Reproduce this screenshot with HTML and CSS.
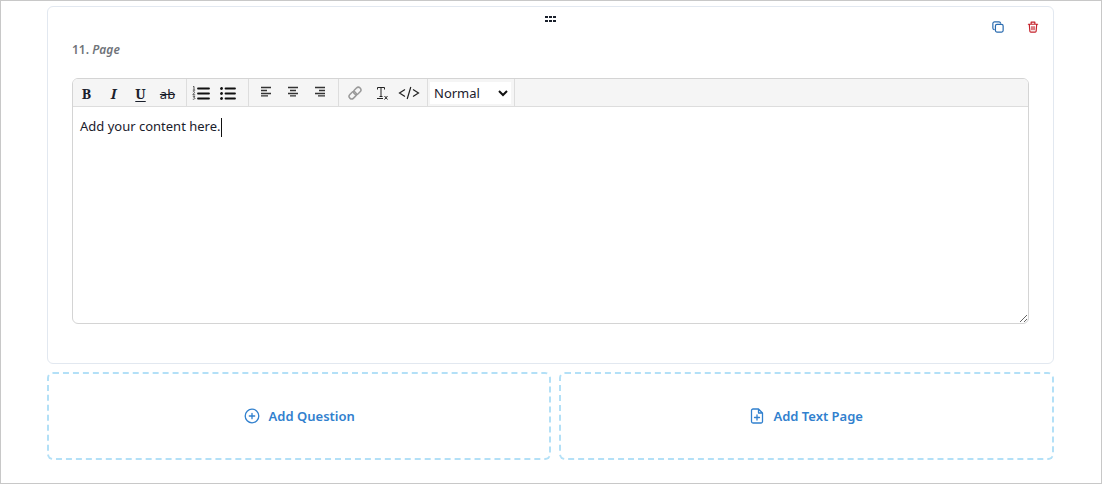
FILE: index.html
```html
<!DOCTYPE html>
<html lang="en">
<head>
<meta charset="utf-8">
<title>Form builder</title>
<link rel="stylesheet" href="styles.css">
</head>
<body class="page">
<main class="builder">
  <section class="card">
    <header class="card-bar">
      <button class="icon-button drag" type="button" aria-label="Move">
        <svg width="12" height="8" viewBox="0 0 12 8" fill="#1a202c"><path d="M0 1h3v2H0zM4 1h3v2H4zM8 1h3v2H8zM0 5h3v2H0zM4 5h3v2H4zM8 5h3v2H8z"/></svg>
      </button>
      <div class="card-actions">
        <button class="icon-button copy" type="button" aria-label="Duplicate">
          <svg width="12" height="12" viewBox="0 0 14 14" fill="none" stroke="currentColor" stroke-width="1.4" stroke-linejoin="round" stroke-linecap="round"><rect x="4" y="4" width="9" height="9" rx="1.8"/><path d="M2.500 10C1.500 9.800 1 9.200 1 8.200V3a2 2 0 0 1 2-2h5.200c1 0 1.600.5 1.800 1.500"/></svg>
        </button>
        <button class="icon-button trash" type="button" aria-label="Delete">
          <svg width="12" height="12" viewBox="0 0 12 13" fill="none" stroke="currentColor" stroke-width="1.3" stroke-linejoin="round" stroke-linecap="round"><path d="M1 3.500h10M4 3.300V1.200h4v2.100M2 3.700l.6 7.400c.1.700.4 1 1 1h4.800c.6 0 .9-.3 1-1l.6-7.400M4.900 6v3.500M7.100 6v3.500"/></svg>
        </button>
      </div>
    </header>
    <h2 class="card-title">11. <em>Page</em></h2>
    <div class="editor">
      <div class="toolbar" role="toolbar" aria-label="Formatting">
        <div class="group styles">
          <button class="tool serif bold" type="button">B</button>
          <button class="tool serif italic" type="button">I</button>
          <button class="tool serif underline" type="button">U</button>
          <button class="tool strike" type="button">ab</button>
        </div>
        <div class="group lists">
          <button class="tool" type="button" aria-label="Numbered list">
            <svg width="18" height="14" viewBox="0 0 18 14"><path d="M6 2.500h11M6 7.500h11M6 12.500h11" stroke="#111" stroke-width="1.8" stroke-linecap="round"/><path d="M1 .8l1-.4V4M.8 4.200h2.400M.8 6c.8-1 2.200-.3 1.600.6L.8 8.800h2.400M.8 10.300h2l-1 1.200c1.800 0 1.400 2.200-1 1.700" fill="none" stroke="#333" stroke-width=".8"/></svg>
          </button>
          <button class="tool" type="button" aria-label="Bulleted list">
            <svg width="16" height="14" viewBox="0 0 16 14"><path d="M5.500 2.500h9.500M5.500 7.500h9.500M5.500 12.500h9.500" stroke="#111" stroke-width="1.8" stroke-linecap="round"/><g fill="#111"><circle cx="1.500" cy="2.500" r="1.400"/><circle cx="1.500" cy="7.500" r="1.400"/><circle cx="1.500" cy="12.500" r="1.400"/></g></svg>
          </button>
        </div>
        <div class="group aligns">
          <button class="tool" type="button" aria-label="Align left">
            <svg width="12" height="12" viewBox="0 0 12 12" stroke="#333" stroke-width="1.300"><path d="M1 1.500h10M1 4.500h6M1 7.500h10M1 9.900h7"/></svg>
          </button>
          <button class="tool" type="button" aria-label="Align center">
            <svg width="12" height="12" viewBox="0 0 12 12" stroke="#333" stroke-width="1.300"><path d="M1 1.500h10M3 4.500h6M1 7.500h10M3 9.900h6"/></svg>
          </button>
          <button class="tool" type="button" aria-label="Align right">
            <svg width="12" height="12" viewBox="0 0 12 12" stroke="#333" stroke-width="1.300"><path d="M1 1.500h10M5 4.500h6M1 7.500h10M4 9.900h7"/></svg>
          </button>
        </div>
        <div class="group inserts">
          <button class="tool" type="button" aria-label="Link" disabled>
            <svg width="14" height="14" viewBox="0 0 14 14" fill="none" stroke="#999" stroke-width="1.500"><rect x="-4" y="-2.600" width="8" height="5.200" rx="2.600" transform="translate(4.700 9.300) rotate(-45)"/><rect x="-4" y="-2.600" width="8" height="5.200" rx="2.600" transform="translate(9.300 4.900) rotate(-45)"/></svg>
          </button>
          <button class="tool" type="button" aria-label="Clear formatting">
            <svg width="14" height="14" viewBox="0 0 14 14" fill="none" stroke="#222"><path d="M2.500 3.500v-2h7v2M6 1.500v9M4.500 10.500h3M2 12.500h6"/><path d="M9.500 10l3 3.500M12.500 10l-3 3.500"/></svg>
          </button>
          <button class="tool" type="button" aria-label="Code">
            <svg width="22" height="14" viewBox="0 0 22 14" fill="none" stroke="#222" stroke-width="1.200"><path d="M7 3.500L1.500 7 7 10.500M15 3.500L20.500 7 15 10.500M12.800 1L9.200 13"/></svg>
          </button>
        </div>
        <div class="group format">
          <select class="format-select" aria-label="Text style"><option>Normal</option><option>Heading</option></select>
          <svg class="chevron" width="10" height="7" viewBox="0 0 10 7" fill="none" stroke="#111" stroke-width="2"><path d="M1 1l4 4 4-4"/></svg>
        </div>
      </div>
      <div class="content" contenteditable="true" role="textbox" aria-multiline="true" aria-label="Page content" spellcheck="false">Add your content here.<span class="caret"></span></div>
    </div>
  </section>
  <div class="add-row">
    <button class="add" type="button">
      <svg width="16" height="16" viewBox="0 0 16 16" fill="none" stroke="currentColor" stroke-width="1.300" stroke-linecap="round"><circle cx="8" cy="8" r="6.800"/><path d="M8 5.300v5.400M5.300 8h5.400"/></svg>
      Add Question
    </button>
    <button class="add" type="button">
      <svg width="14" height="16" viewBox="0 0 14 16" fill="none" stroke="currentColor" stroke-width="1.300" stroke-linecap="round" stroke-linejoin="round"><path d="M8.500 1H3a1.500 1.500 0 0 0-1.500 1.500v11A1.500 1.500 0 0 0 3 15h8a1.500 1.500 0 0 0 1.500-1.500V5zM8.500 1v4h4M7 7v5M4.500 9.500h5"/></svg>
      Add Text Page
    </button>
  </div>
</main>
</body>
</html>
```
FILE: styles.css
```css
* { box-sizing: border-box; }

.page {
  margin: 0;
  min-height: 100vh;
  padding: 5px 47px 20px 46px;
  border: 1px solid #c8c8c8;
  background: #fff;
  color: #1a202c;
  font-family: "Segoe UI", "Noto Sans", sans-serif;
  font-size: 13px;
  line-height: 20px;
}

button, select { font: inherit; color: inherit; }
svg { display: block; flex: none; }

.builder {
  display: flex;
  flex-direction: column;
  gap: 8px;
}

.card {
  padding: 8px 24px 39px;
  border: 1px solid #e2e8f0;
  border-radius: 6px;
}

.card-bar {
  display: grid;
  grid-template-columns: 1fr auto 1fr;
  align-items: start;
  height: 25px;
}

.icon-button {
  padding: 0;
  border: 0;
  background: none;
  cursor: pointer;
}

.drag { grid-column: 2; }

.card-actions {
  display: flex;
  justify-content: flex-end;
  gap: 23px;
  padding-top: 6px;
  margin-right: -10px;
}

.copy { color: #2b6cb0; }
.trash { color: #c5222b; }

.card-title {
  margin: 0 0 18px;
  color: #6f7379;
  font-size: 12px;
  line-height: 20px;
  font-weight: 600;
}

.editor {
  display: flex;
  flex-direction: column;
  height: 246px;
  border: 1px solid #d4d4d4;
  border-radius: 6px;
  overflow: hidden;
  resize: vertical;
}

.toolbar {
  display: flex;
  border-bottom: 1px solid #ddd;
  background: #f5f5f5;
}

.group {
  display: flex;
  align-items: center;
  height: 27px;
  border-right: 1px solid #ddd;
}

.styles { padding-right: 5px; }
.lists { padding-right: 7px; }
.aligns { padding: 0 5px 0 3px; }
.inserts { padding: 0 5px 0 2px; }

.tool {
  display: flex;
  align-items: center;
  justify-content: center;
  width: 27px;
  height: 27px;
  padding: 0;
  border: 0;
  background: none;
}

.aligns .tool { padding-bottom: 2px; }

.serif { padding-top: 2px; font-family: "Noto Serif", "Liberation Serif", serif; font-size: 14px; font-weight: 700; }
.italic { font-style: italic; }
.underline { text-decoration: underline; text-underline-offset: 2px; }
.strike { padding-top: 2px; text-decoration: line-through; }

.format { position: relative; padding: 0 3px 0 2px; }

.format-select {
  width: 81px;
  height: 22px;
  padding: 0 20px 0 4px;
  border: 0;
  background: #fff;
  appearance: none;
}

.chevron {
  position: absolute;
  top: 11px;
  right: 6px;
  pointer-events: none;
}

.content {
  flex: 1;
  padding: 9px 7px;
  outline: 0;
}

.caret {
  display: inline-block;
  width: 1px;
  height: 19px;
  background: #111;
  vertical-align: middle;
}

.add-row {
  display: grid;
  grid-template-columns: 51fr 50fr;
  gap: 8px;
}

.add {
  display: flex;
  align-items: center;
  justify-content: center;
  gap: 9px;
  height: 88px;
  border: 2px dashed #b3e0f7;
  border-radius: 6px;
  background: none;
  color: #3180ce;
  font-weight: 600;
}
```
